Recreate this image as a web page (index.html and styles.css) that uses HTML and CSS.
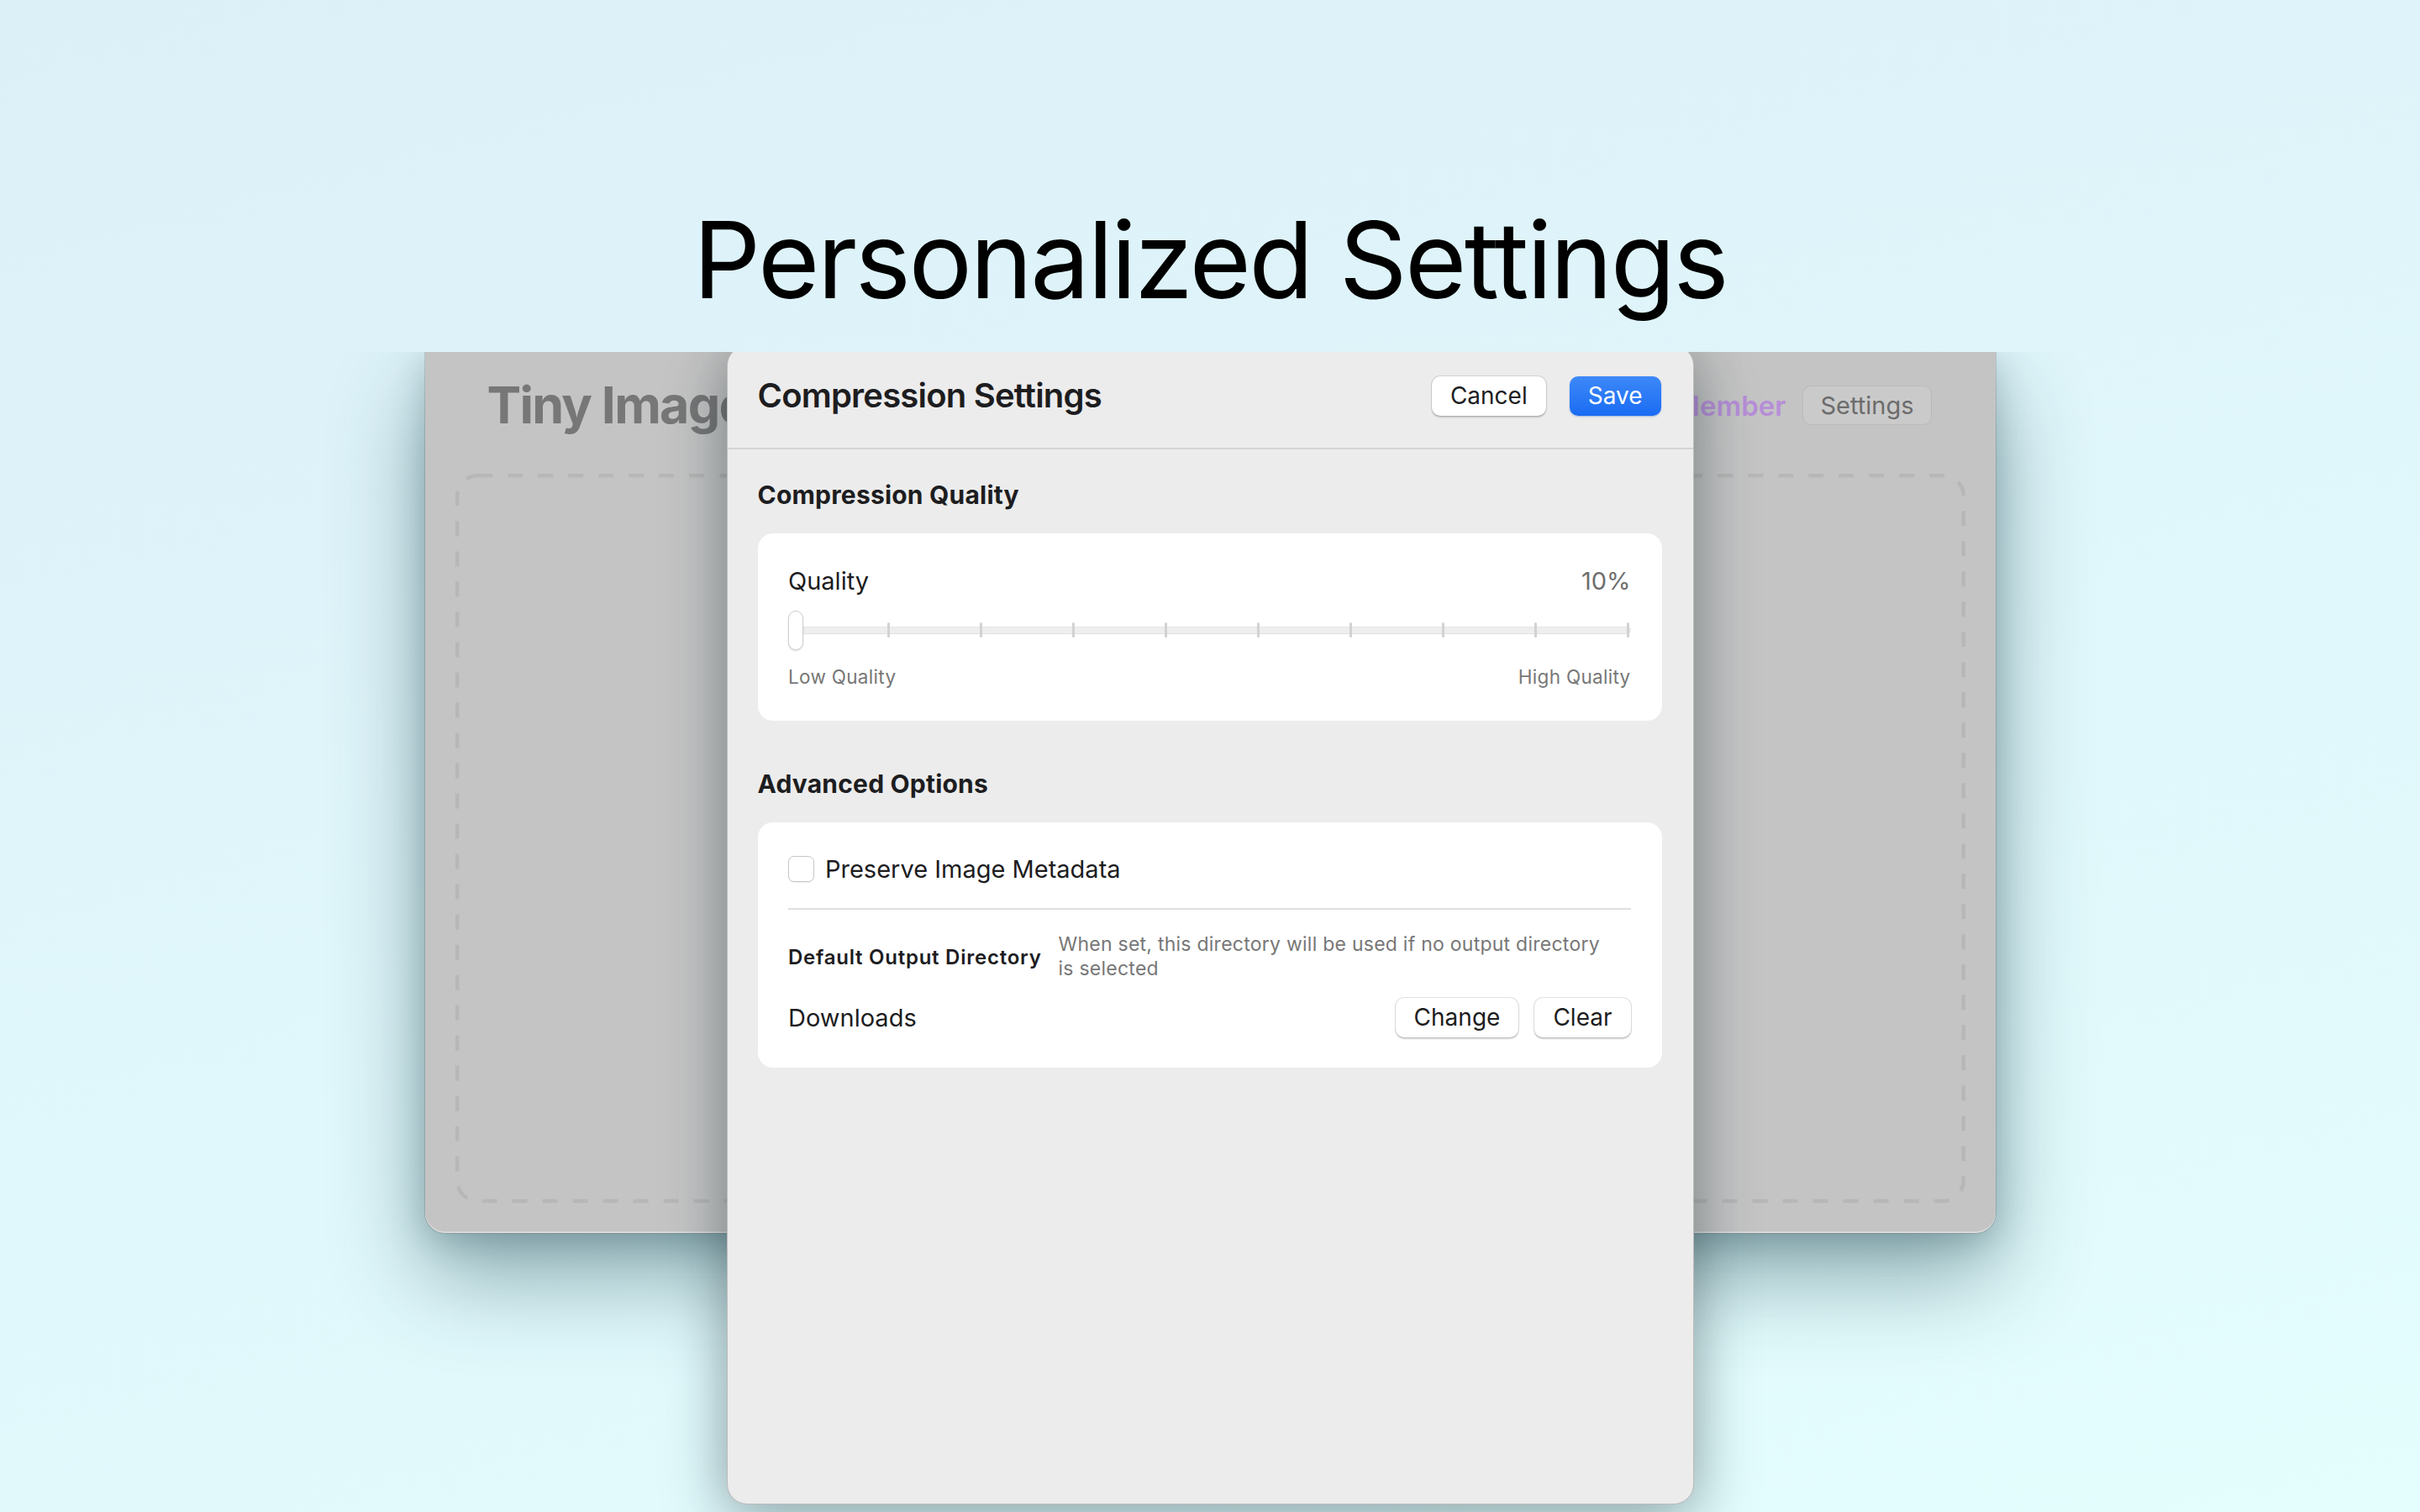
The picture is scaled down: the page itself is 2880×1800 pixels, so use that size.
FILE: index.html
```html
<!DOCTYPE html>
<html lang="en">
<head>
<meta charset="utf-8">
<title>Personalized Settings</title>
<link rel="stylesheet" href="styles.css">
</head>
<body>
  <header class="hero">
    <h1 class="hero-title">Personalized Settings</h1>
  </header>

  <section class="stage">
    <div class="app-window">
      <div class="app-bar">
        <h2 class="app-title">Tiny Image</h2>
        <div class="app-actions">
          <span class="member">Member</span>
          <span class="ghost-btn">Settings</span>
        </div>
      </div>
      <div class="dropzone">
        <svg class="dash-svg" xmlns="http://www.w3.org/2000/svg"><rect class="dash-rect"/></svg>
      </div>
    </div>

    <div class="sheet">
      <div class="sheet-header">
        <h3 class="sheet-title">Compression Settings</h3>
        <div class="sheet-actions">
          <span class="btn">Cancel</span>
          <span class="btn btn-primary">Save</span>
        </div>
      </div>

      <div class="sheet-body">
        <h4 class="section-title">Compression Quality</h4>
        <div class="card card-quality">
          <div class="row-between">
            <span class="label">Quality</span>
            <span class="value">10%</span>
          </div>
          <div class="slider">
            <div class="track">
              <i class="tick"></i><i class="tick"></i><i class="tick"></i><i class="tick"></i><i class="tick"></i>
              <i class="tick"></i><i class="tick"></i><i class="tick"></i><i class="tick"></i><i class="tick"></i>
            </div>
            <div class="knob"></div>
          </div>
          <div class="row-between hints">
            <span>Low Quality</span>
            <span>High Quality</span>
          </div>
        </div>

        <h4 class="section-title section-gap">Advanced Options</h4>
        <div class="card card-advanced">
          <div class="check-row">
            <span class="checkbox"></span>
            <span class="label">Preserve Image Metadata</span>
          </div>
          <div class="divider"></div>
          <div class="dir-row">
            <span class="dir-label">Default Output Directory</span>
            <span class="dir-desc">When set, this directory will be used if no output directory is selected</span>
          </div>
          <div class="path-row">
            <span class="label">Downloads</span>
            <div class="path-actions">
              <span class="btn">Change</span>
              <span class="btn">Clear</span>
            </div>
          </div>
        </div>
      </div>
    </div>
  </section>
</body>
</html>
```

FILE: styles.css
```css
* { box-sizing: border-box; }

html, body {
  margin: 0;
  padding: 0;
}

body {
  width: 2880px;
  height: 1800px;
  overflow: hidden;
  font-family: Inter, "Noto Sans", "Liberation Sans", sans-serif;
  background: linear-gradient(165deg, #dcf0f8 0%, #e0f7fb 55%, #e4fdfd 100%);
  color: #1d1d1f;
}

/* ---------- hero ---------- */
.hero {
  height: 419px;
  padding-top: 233px;
  text-align: center;
}

.hero-title {
  margin: 0;
  font-size: 126px;
  line-height: 152px;
  font-weight: 400;
  letter-spacing: -2.6px;
  color: #000;
}

/* ---------- stage ---------- */
.stage {
  position: relative;
  height: 1381px;
  overflow: hidden;
  display: flex;
  justify-content: center;
  align-items: flex-start;
}

.app-window {
  width: 1869px;
  height: 1049px;
  background: #c4c4c4;
  border-radius: 0 0 24px 24px;
  box-shadow:
    0 0 0 1px rgba(0, 0, 0, 0.12),
    inset 0 -2px 0 rgba(255, 255, 255, 0.35),
    0 50px 110px rgba(30, 70, 80, 0.45),
    0 10px 40px rgba(30, 70, 80, 0.25);
  padding: 0 36px 36px 36px;
  display: flex;
  flex-direction: column;
}

.app-bar {
  height: 145px;
  padding: 26px 40px 0 38px;
  display: flex;
  justify-content: space-between;
  align-items: flex-start;
}

.app-title {
  margin: 0;
  font-size: 61px;
  line-height: 74px;
  font-weight: 700;
  letter-spacing: -1.8px;
  color: #777777;
}

.app-actions {
  margin-top: 14px;
  display: flex;
  align-items: center;
  gap: 20px;
}

.member {
  font-size: 33px;
  font-weight: 600;
  color: #b68ed8;
}

.ghost-btn {
  height: 47px;
  padding: 0 20px;
  display: flex;
  align-items: center;
  font-size: 29px;
  color: #6c6c6c;
  background: #cacaca;
  border: 1.5px solid #bababa;
  border-radius: 10px;
}

.dropzone {
  flex: 1;
}

.dash-svg {
  display: block;
  width: 100%;
  height: 100%;
}

.dash-rect {
  x: 2.25px;
  y: 2.25px;
  width: calc(100% - 4.5px);
  height: calc(100% - 4.5px);
  rx: 24px;
  ry: 24px;
  fill: none;
  stroke: #b7b7b7;
  stroke-width: 4.5px;
  stroke-dasharray: 18 18;
}

/* ---------- sheet ---------- */
.sheet {
  position: absolute;
  top: -8px;
  left: calc(50% - 575.5px);
  width: 1151px;
  height: 1380px;
  background: #ececec;
  border: 1px solid rgba(0, 0, 0, 0.2);
  border-radius: 24px;
  box-shadow:
    0 0 60px rgba(0, 0, 0, 0.22),
    0 30px 80px rgba(20, 60, 70, 0.25);
  display: flex;
  flex-direction: column;
}

.sheet-header {
  height: 123px;
  padding: 0 38px 3px 36px;
  border-bottom: 2px solid #d4d4d4;
  display: flex;
  justify-content: space-between;
  align-items: center;
}

.sheet-title {
  margin: 0;
  font-size: 40px;
  line-height: 48px;
  font-weight: 600;
  letter-spacing: -0.8px;
  color: #1d1d1f;
}

.sheet-actions {
  display: flex;
  gap: 28px;
}

.btn {
  height: 47px;
  padding: 0 22px;
  display: flex;
  align-items: center;
  justify-content: center;
  font-size: 28px;
  color: #1d1d1f;
  background: #ffffff;
  border-radius: 10px;
  box-shadow:
    0 0 0 1px rgba(0, 0, 0, 0.1),
    0 1.5px 2px rgba(0, 0, 0, 0.18);
}

.btn-primary {
  color: #ffffff;
  background: linear-gradient(180deg, #3d88f8 0%, #1a6cf3 100%);
  box-shadow: 0 1px 2px rgba(0, 60, 180, 0.3);
}

.sheet-body {
  padding: 36px 37px 0 36px;
  display: flex;
  flex-direction: column;
}

.section-title {
  margin: 0 0 27.5px 0;
  font-size: 30px;
  line-height: 36px;
  font-weight: 700;
  letter-spacing: 0.2px;
  color: #1d1d1f;
}

.section-gap {
  margin-top: 57.5px;
}

.card {
  background: #ffffff;
  border-radius: 18px;
  padding: 0 37px 0 36.5px;
}

.card-quality {
  padding-top: 39px;
  padding-bottom: 38.5px;
}

.row-between {
  display: flex;
  justify-content: space-between;
  align-items: center;
}

.label {
  font-size: 29px;
  line-height: 35px;
  color: #1d1d1f;
}

.value {
  font-size: 29px;
  line-height: 35px;
  color: #6e6e6e;
}

.slider {
  position: relative;
  margin-top: 18px;
  height: 47px;
  display: flex;
  align-items: center;
}

.track {
  flex: 1;
  margin-left: 7px;
  height: 9px;
  background: #eeeeee;
  border: 1px solid #e4e4e4;
  border-radius: 5px;
  display: flex;
  justify-content: space-between;
  align-items: center;
}

.tick {
  width: 3px;
  height: 18px;
  border-radius: 1.5px;
  background: #d2d2d2;
}

.knob {
  position: absolute;
  left: 0;
  top: 0;
  width: 18px;
  height: 47px;
  background: #ffffff;
  border: 1px solid #cfcfcf;
  border-radius: 9px;
  box-shadow: 0 1px 2px rgba(0, 0, 0, 0.15);
}

.hints {
  margin-top: 18.5px;
  font-size: 22.5px;
  line-height: 27px;
  letter-spacing: 0.3px;
  color: #777777;
}

.card-advanced {
  padding-top: 38.5px;
  padding-bottom: 36px;
}

.check-row {
  display: flex;
  align-items: center;
  gap: 13px;
}

.checkbox {
  width: 31px;
  height: 31px;
  background: #ffffff;
  border: 1.5px solid #c6c6c6;
  border-radius: 7px;
  box-shadow: 0 1px 1px rgba(0, 0, 0, 0.06);
}

.divider {
  margin-top: 28.5px;
  height: 2px;
  background: #dedede;
}

.dir-row {
  margin-top: 27.5px;
  display: flex;
  align-items: center;
  gap: 20px;
}

.dir-label {
  font-size: 24px;
  line-height: 29px;
  font-weight: 600;
  letter-spacing: 0.75px;
  color: #1d1d1f;
  white-space: nowrap;
}

.dir-desc {
  max-width: 655px;
  font-size: 23px;
  line-height: 29px;
  letter-spacing: 0.25px;
  color: #777777;
}

.path-row {
  margin-top: 19.5px;
  display: flex;
  justify-content: space-between;
  align-items: center;
}

.path-actions {
  display: flex;
  gap: 19px;
}
```
